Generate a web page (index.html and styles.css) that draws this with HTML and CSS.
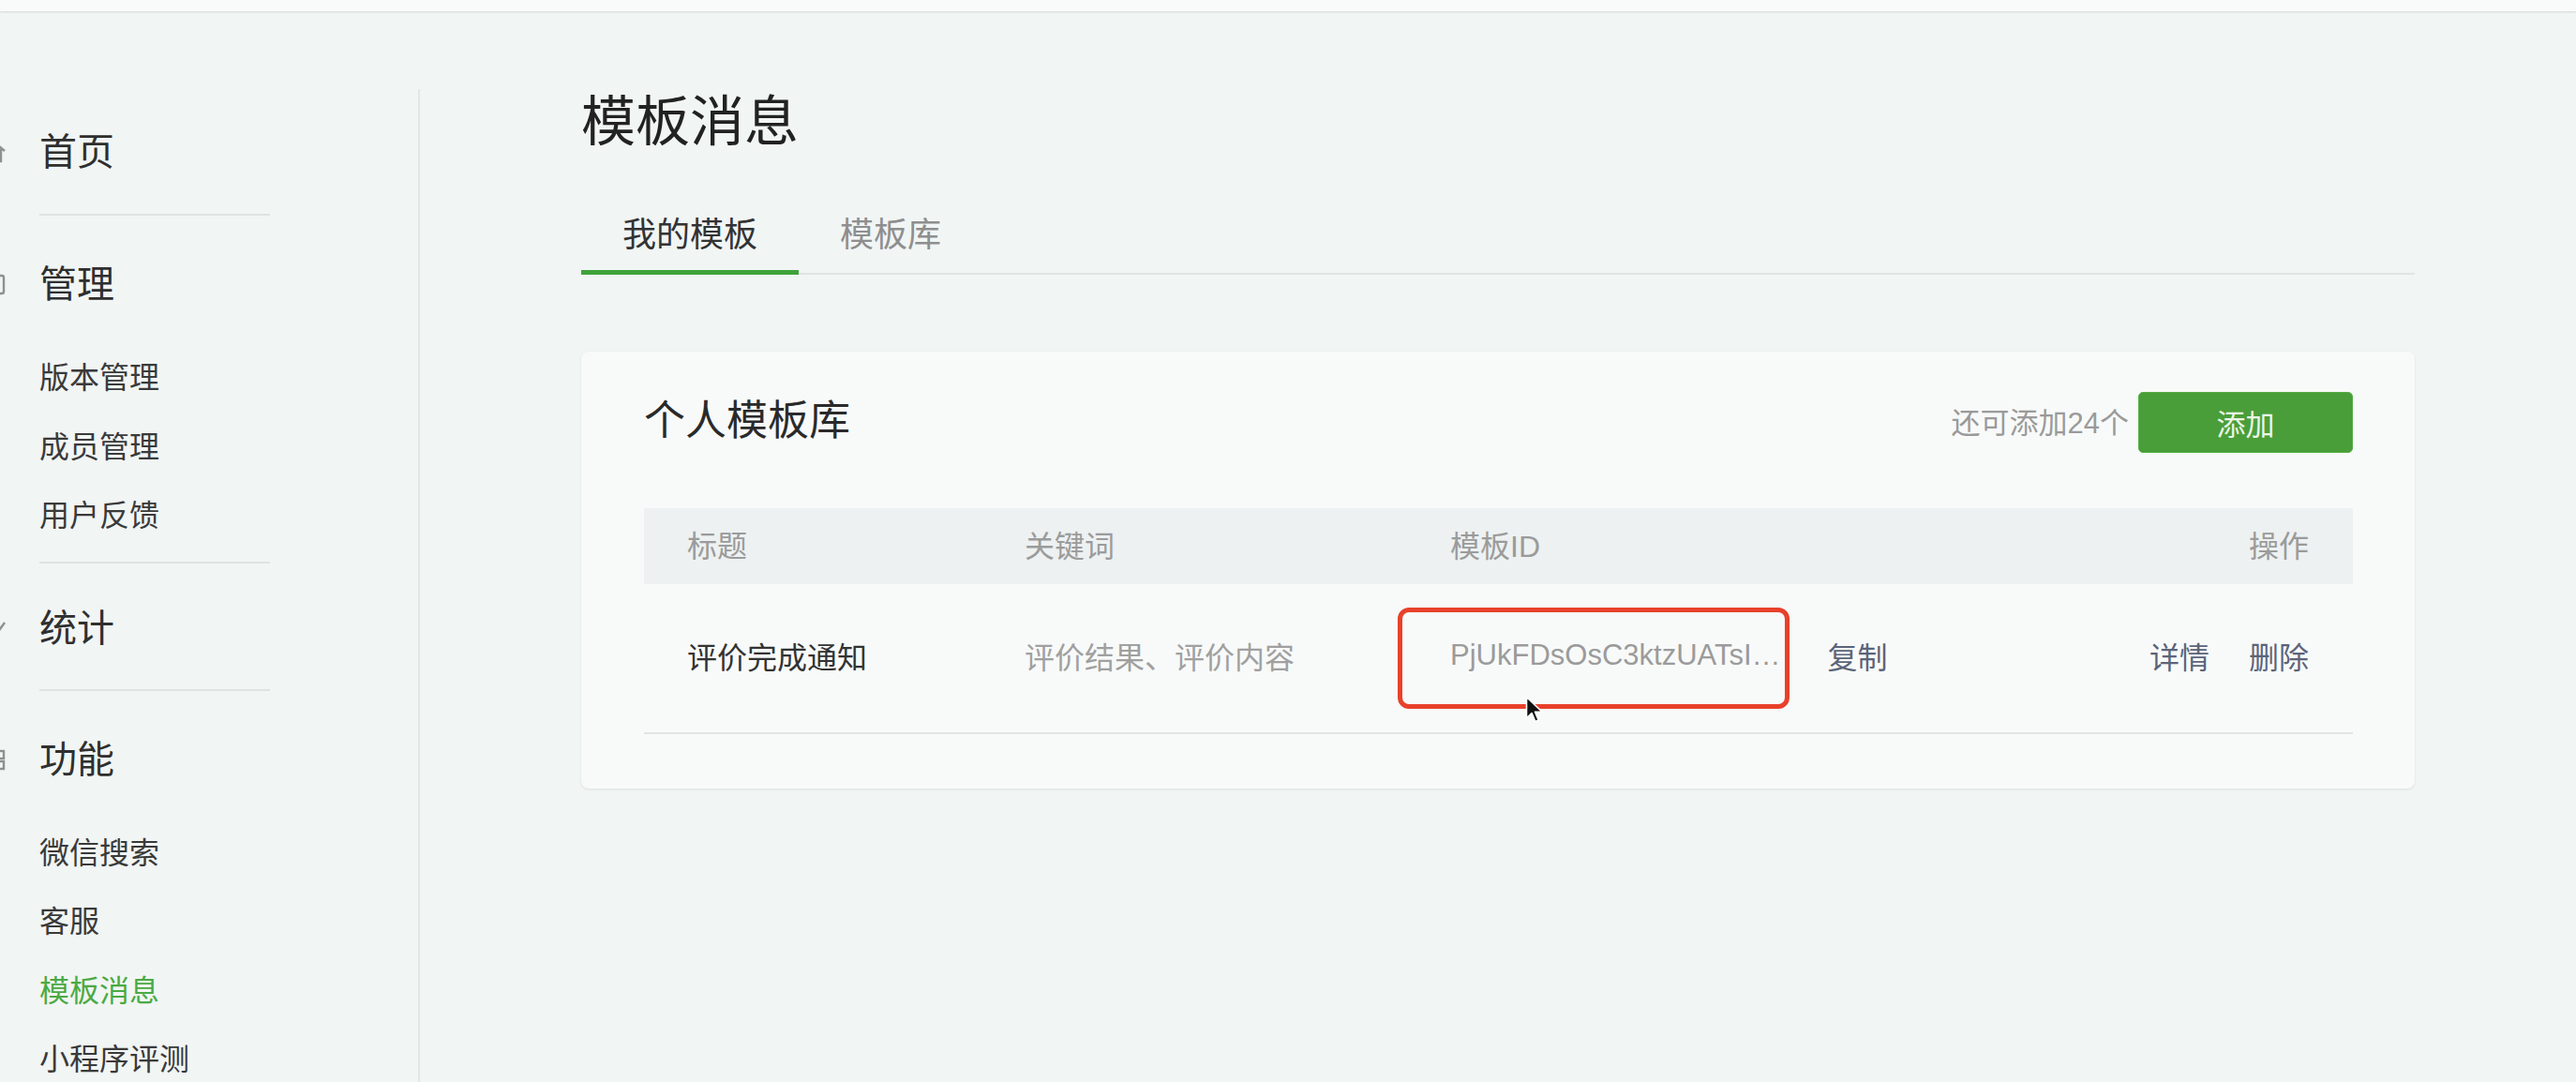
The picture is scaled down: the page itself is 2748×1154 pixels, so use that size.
FILE: index.html
```html
<!DOCTYPE html>
<html lang="zh-CN">
<head>
<meta charset="utf-8">
<title>模板消息</title>
<link rel="stylesheet" href="styles.css">
</head>
<body>
<header class="topbar"></header>
<div class="layout">
  <aside class="sidebar">
    <nav class="nav">
      <div class="nav-group nav-group-first">
        <div class="nav-title">
          <svg class="nav-icon" viewBox="0 0 28 28"><path d="M3 13 L14 4 L25 13 M7 11 V24 H21 V11" fill="none" stroke="#8d9190" stroke-width="2.4"/></svg>
          首页
        </div>
      </div>
      <div class="nav-group nav-group-sub">
        <div class="nav-title">
          <svg class="nav-icon" viewBox="0 0 28 28"><rect x="5" y="5" width="19" height="19" rx="2" fill="none" stroke="#8d9190" stroke-width="2.4"/></svg>
          管理
        </div>
        <ul class="nav-sub">
          <li>版本管理</li>
          <li>成员管理</li>
          <li>用户反馈</li>
        </ul>
      </div>
      <div class="nav-group nav-group-single">
        <div class="nav-title">
          <svg class="nav-icon" viewBox="0 0 28 28"><path d="M4 24 L12 14 L17 19 L25 8" fill="none" stroke="#8d9190" stroke-width="2.4"/></svg>
          统计
        </div>
      </div>
      <div class="nav-group nav-group-sub nav-group-last">
        <div class="nav-title">
          <svg class="nav-icon" viewBox="0 0 28 28"><rect x="5" y="5" width="8" height="8" fill="none" stroke="#8d9190" stroke-width="2.4"/><rect x="16" y="5" width="8" height="8" fill="none" stroke="#8d9190" stroke-width="2.4"/><rect x="5" y="16" width="8" height="8" fill="none" stroke="#8d9190" stroke-width="2.4"/><rect x="16" y="16" width="8" height="8" fill="none" stroke="#8d9190" stroke-width="2.4"/></svg>
          功能
        </div>
        <ul class="nav-sub">
          <li>微信搜索</li>
          <li>客服</li>
          <li class="active">模板消息</li>
          <li>小程序评测</li>
        </ul>
      </div>
    </nav>
  </aside>

  <main class="main">
    <h1 class="page-title">模板消息</h1>
    <div class="tabs">
      <a class="tab tab-active">我的模板</a>
      <a class="tab">模板库</a>
    </div>

    <section class="card">
      <div class="card-head">
        <h2 class="card-title">个人模板库</h2>
        <div class="card-actions">
          <span class="quota">还可添加24个</span>
          <button class="btn-primary">添加</button>
        </div>
      </div>

      <div class="table">
        <div class="row-grid thead">
          <span>标题</span>
          <span>关键词</span>
          <span>模板ID</span>
          <span class="col-ops">操作</span>
        </div>
        <div class="row-grid trow">
          <span class="t-title">评价完成通知</span>
          <span class="t-muted">评价结果、评价内容</span>
          <span class="t-id"><span class="id-text">PjUkFDsOsC3ktzUATsI…</span><a class="link">复制</a></span>
          <span class="col-ops"><a class="link">详情</a><a class="link">删除</a></span>
          <span class="highlight"></span>
          <svg class="cursor" viewBox="0 0 20 30"><path d="M1.5 1.5 L1.5 24 L7 18.5 L10.8 27.5 L14.2 26 L10.5 17.2 L18 17.2 Z" fill="#111" stroke="#fff" stroke-width="1.6" stroke-linejoin="round"/></svg>
        </div>
      </div>
    </section>
  </main>
</div>
</body>
</html>
```

FILE: styles.css
```css
html, body {
  margin: 0;
  padding: 0;
  height: 100%;
  overflow: hidden;
}

body {
  background: #f1f5f4;
  font-family: "Liberation Sans", "Noto Sans CJK SC", sans-serif;
  color: #353535;
}

.topbar {
  height: 12px;
  background: #f8fbfa;
  box-shadow: 0 1px 2px rgba(0, 0, 0, 0.13);
  position: relative;
  z-index: 1;
}

.layout {
  display: flex;
  height: calc(100% - 12px);
}

/* Sidebar */
.sidebar {
  width: 446px;
  flex: none;
  margin-top: 83px;
  border-right: 2px solid #e2e6e5;
  overflow: hidden;
  position: relative;
}

.nav {
  width: 246px;
  margin-left: 42px;
}

.nav-group {
  padding: 39px 0 11px;
  border-bottom: 2px solid #dfe3e2;
}

.nav-group-first {
  padding: 33px 0 32px;
}

.nav-group-single {
  padding: 35px 0 31px;
}

.nav-group-last {
  border-bottom: none;
}

.nav-title {
  position: relative;
  font-size: 40px;
  line-height: 68px;
  height: 68px;
  color: #2f2f2f;
  white-space: nowrap;
}

.nav-icon {
  position: absolute;
  left: -62px;
  top: 20px;
  width: 28px;
  height: 28px;
}

.nav-sub {
  list-style: none;
  margin: 30px 0 0;
  padding: 0;
}

.nav-sub li {
  font-size: 32px;
  line-height: 73.5px;
  height: 73.5px;
  color: #3a3a3a;
  white-space: nowrap;
}

.nav-sub li.active {
  color: #4aaa42;
}

/* Main */
.main {
  flex: 1;
  min-width: 0;
  padding: 78px 172px 0;
}

.page-title {
  margin: 0;
  font-size: 58px;
  line-height: 80px;
  font-weight: 400;
  color: #222;
}

.tabs {
  display: flex;
  margin-top: 56px;
  border-bottom: 2px solid #e1e4e3;
}

.tab {
  display: block;
  padding: 0 44px 12px;
  font-size: 36px;
  line-height: 50px;
  color: #8e8e8e;
  border-bottom: 5px solid transparent;
  margin-bottom: -2px;
  cursor: pointer;
}

.tab-active {
  color: #333;
  border-bottom-color: #3fa33a;
}

/* Card */
.card {
  margin-top: 82px;
  background: #f8faf9;
  border-radius: 8px;
  box-shadow: 0 1px 3px rgba(0, 0, 0, 0.09);
  padding: 43px 66px 58px 67px;
}

.card-head {
  display: flex;
  justify-content: space-between;
  align-items: flex-start;
}

.card-title {
  margin: 5px 0 0;
  font-size: 44px;
  line-height: 52px;
  font-weight: 400;
  color: #2a2a2a;
}

.card-actions {
  display: flex;
  align-items: center;
  gap: 10px;
}

.quota {
  font-size: 31px;
  color: #9a9a9a;
  margin-bottom: 4px;
}

.btn-primary {
  width: 229px;
  height: 65px;
  border: 1px solid #55ad44;
  border-radius: 5px;
  background: #4a9e39;
  color: #eaf6e6;
  font-family: inherit;
  font-size: 31px;
  padding: 0;
}

/* Table */
.table {
  margin-top: 59px;
}

.row-grid {
  display: grid;
  grid-template-columns: 360px 454px 1fr auto;
  align-items: center;
  padding: 0 47px 0 46px;
  box-sizing: border-box;
}

.thead {
  height: 81px;
  padding-bottom: 6px;
  background: #edf1f1;
  font-size: 32px;
  color: #9b9b9b;
}

.trow {
  position: relative;
  height: 160px;
  padding-bottom: 6px;
  border-bottom: 2px solid #e1e5e4;
  font-size: 32px;
}

.t-title {
  color: #333;
}

.t-muted {
  color: #a0a0a0;
}

.t-id {
  display: flex;
  align-items: center;
  gap: 50px;
}

.id-text {
  font-family: "Liberation Sans", sans-serif;
  font-size: 31px;
  color: #9b9b9b;
  white-space: nowrap;
}

.link {
  color: #5b6479;
  cursor: pointer;
}

.col-ops {
  display: flex;
  justify-content: flex-end;
  gap: 42px;
}

.thead .col-ops {
  display: block;
}

.highlight {
  position: absolute;
  left: 804px;
  top: 25px;
  width: 418px;
  height: 108px;
  box-sizing: border-box;
  border: 5px solid #e8412b;
  border-radius: 12px;
  pointer-events: none;
}

.cursor {
  position: absolute;
  left: 940px;
  top: 119px;
  width: 20px;
  height: 30px;
}
```
